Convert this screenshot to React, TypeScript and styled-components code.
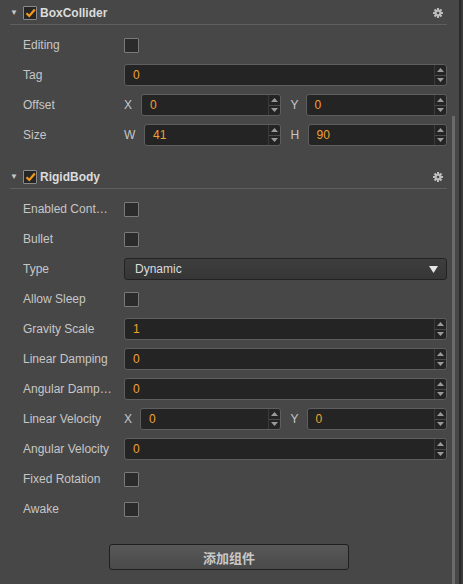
import React from "react";
import styled, { createGlobalStyle } from "styled-components";

const Global = createGlobalStyle`
  html, body { margin: 0; padding: 0; background: #474747; }
  body { font-family: "Liberation Sans", Arial, "Noto Sans CJK SC", sans-serif; font-size: 12px; }
`;

const Frame = styled.div`
  display: flex;
  width: 463px;
  height: 584px;
  background: #474747;
  overflow: hidden;
`;

const Content = styled.div`
  flex: 1;
  display: flex;
  flex-direction: column;
  padding: 0 0 0 10px;
  min-width: 0;
`;

const ScrollTrack = styled.div`
  width: 7px;
  display: flex;
  flex-direction: column;
`;

const Thumb = styled.div`
  margin-top: 116px;
  width: 3px;
  flex: 1;
  background: #6b6b6b;
`;

const Edge = styled.div`
  width: 4px;
  background: linear-gradient(to right, #2a2a2a 0 2px, #3a3a3a 2px);
`;

const Section = styled.div<{ $top: number }>`
  display: flex;
  flex-direction: column;
  margin-top: ${(p) => p.$top}px;
`;

const Header = styled.div`
  display: flex;
  align-items: center;
  height: 23px;
  padding-top: 1px;
  border-bottom: 1px solid #5f5f5f;
  margin-right: 5px;
  margin-bottom: 5px;
  gap: 3px;
`;

const Caret = styled.span`
  color: #c8c8c8;
  font-size: 8px;
  width: 10px;
  padding-left: 0;
`;

const HeadCheck = styled.span`
  display: inline-flex;
  align-items: center;
  justify-content: center;
  width: 12px;
  height: 12px;
  border: 1px solid #8a8a8a;
  background: #262626;
  border-radius: 1px;
`;

const Title = styled.span`
  color: #dcdcdc;
  font-weight: bold;
  font-size: 12px;
  flex: 1;
`;

const GearWrap = styled.span`
  display: inline-flex;
  margin-right: 4px;
`;

const Row = styled.div`
  display: flex;
  align-items: center;
  height: 30px;
  padding-left: 13px;
  padding-right: 5px;
`;

const Label = styled.div`
  width: 101px;
  color: #c6c6c6;
  font-size: 12px;
  white-space: nowrap;
  overflow: hidden;
`;

const Field = styled.div`
  flex: 1;
  display: flex;
  align-items: center;
  min-width: 0;
`;

const Check = styled.span`
  width: 13px;
  height: 13px;
  border: 1px solid #7a7a7a;
  background: #2b2b2b;
  border-radius: 1px;
`;

const InputBox = styled.div`
  flex: 1;
  display: flex;
  height: 20px;
  border: 1px solid #5e5e5e;
  border-radius: 3px;
  background: #242424;
  min-width: 0;
`;

const Value = styled.div`
  flex: 1;
  color: #f0a033;
  font-size: 12px;
  line-height: 20px;
  padding-left: 8px;
`;

const Spin = styled.div`
  width: 11px;
  display: flex;
  flex-direction: column;
  border-left: 1px solid #3a3a3a;
`;

const SpinHalf = styled.div<{ $bottom?: boolean }>`
  flex: 1;
  display: flex;
  align-items: center;
  justify-content: center;
  border-top: ${(p) => (p.$bottom ? "1px solid #4a4a4a" : "none")};
`;

const Axis = styled.div<{ $w: number }>`
  width: ${(p) => p.$w}px;
  color: #c6c6c6;
  font-size: 12px;
`;

const Pair = styled.div`
  flex: 1;
  display: flex;
  align-items: center;
  min-width: 0;
`;

const PairGap = styled.div`
  width: 10px;
`;

const Select = styled.div`
  flex: 1;
  display: flex;
  align-items: center;
  justify-content: space-between;
  height: 20px;
  border: 1px solid #222;
  border-radius: 3px;
  background: linear-gradient(#3e3e3e, #363636);
  padding: 0 8px 0 10px;
  color: #dcdcdc;
  font-size: 12px;
`;

const Footer = styled.div`
  display: flex;
  justify-content: center;
  margin-top: 20px;
  padding-right: 4px;
`;

const Button = styled.button`
  width: 240px;
  height: 26px;
  border: 1px solid #1f1f1f;
  border-radius: 3px;
  background: linear-gradient(#585858, #4a4a4a);
  color: #c8c8c8;
  font-family: "Liberation Sans", "Noto Sans CJK SC", sans-serif;
  font-size: 13px;
  font-weight: bold;
`;

const Tri = ({ up }: { up?: boolean }) => (
  <svg width="7" height="4" viewBox="0 0 7 4">
    <path d={up ? "M0 4 L3.5 0 L7 4Z" : "M0 0 L3.5 4 L7 0Z"} fill="#9a9a9a" />
  </svg>
);

const Number = ({ v }: { v: string }) => (
  <InputBox>
    <Value>{v}</Value>
    <Spin>
      <SpinHalf>
        <Tri up />
      </SpinHalf>
      <SpinHalf $bottom>
        <Tri />
      </SpinHalf>
    </Spin>
  </InputBox>
);

const Gear = () => (
  <svg width="10" height="10" viewBox="0 0 10 10">
    <g fill="#bdbdbd">
      <circle cx="5" cy="5" r="3.4" />
      <rect x="4" y="0" width="2" height="10" />
      <rect x="0" y="4" width="10" height="2" />
      <rect x="4" y="0" width="2" height="10" transform="rotate(45 5 5)" />
      <rect x="4" y="0" width="2" height="10" transform="rotate(-45 5 5)" />
    </g>
    <circle cx="5" cy="5" r="1.3" fill="#474747" />
  </svg>
);

const CompHeader = ({ title }: { title: string }) => (
  <Header>
    <Caret>▼</Caret>
    <HeadCheck>
      <svg width="11" height="10" viewBox="0 0 11 10">
        <path d="M1.5 5.2 L4.3 8 L9.8 1.5" stroke="#f39a1e" strokeWidth="2.2" fill="none" />
      </svg>
    </HeadCheck>
    <Title>{title}</Title>
    <GearWrap>
      <Gear />
    </GearWrap>
  </Header>
);

type Vec = { a: string; av: string; aw: number; b: string; bv: string; bw: number };

const VecField = ({ a, av, aw, b, bv, bw }: Vec) => (
  <Field>
    <Pair>
      <Axis $w={aw}>{a}</Axis>
      <Number v={av} />
    </Pair>
    <PairGap />
    <Pair>
      <Axis $w={bw}>{b}</Axis>
      <Number v={bv} />
    </Pair>
  </Field>
);

const CheckRow = ({ label }: { label: string }) => (
  <Row>
    <Label>{label}</Label>
    <Field>
      <Check />
    </Field>
  </Row>
);

const NumRow = ({ label, v }: { label: string; v: string }) => (
  <Row>
    <Label>{label}</Label>
    <Field>
      <Number v={v} />
    </Field>
  </Row>
);

export default function App() {
  return (
    <>
      <Global />
      <Frame>
        <Content>
          <Section $top={0}>
            <CompHeader title="BoxCollider" />
            <CheckRow label="Editing" />
            <NumRow label="Tag" v="0" />
            <Row>
              <Label>Offset</Label>
              <VecField a="X" av="0" aw={17} b="Y" bv="0" bw={15} />
            </Row>
            <Row>
              <Label>Size</Label>
              <VecField a="W" av="41" aw={20} b="H" bv="90" bw={17} />
            </Row>
          </Section>
          <Section $top={14}>
            <CompHeader title="RigidBody" />
            <CheckRow label="Enabled Cont…" />
            <CheckRow label="Bullet" />
            <Row>
              <Label>Type</Label>
              <Field>
                <Select>
                  <span>Dynamic</span>
                  <svg width="9" height="7" viewBox="0 0 9 7">
                    <path d="M0 0 L9 0 L4.5 7Z" fill="#e6e6e6" />
                  </svg>
                </Select>
              </Field>
            </Row>
            <CheckRow label="Allow Sleep" />
            <NumRow label="Gravity Scale" v="1" />
            <NumRow label="Linear Damping" v="0" />
            <NumRow label="Angular Damp…" v="0" />
            <Row>
              <Label>Linear Velocity</Label>
              <VecField a="X" av="0" aw={16} b="Y" bv="0" bw={16} />
            </Row>
            <NumRow label="Angular Velocity" v="0" />
            <CheckRow label="Fixed Rotation" />
            <CheckRow label="Awake" />
          </Section>
          <Footer>
            <Button>添加组件</Button>
          </Footer>
        </Content>
        <ScrollTrack>
          <Thumb />
        </ScrollTrack>
        <Edge />
      </Frame>
    </>
  );
}
